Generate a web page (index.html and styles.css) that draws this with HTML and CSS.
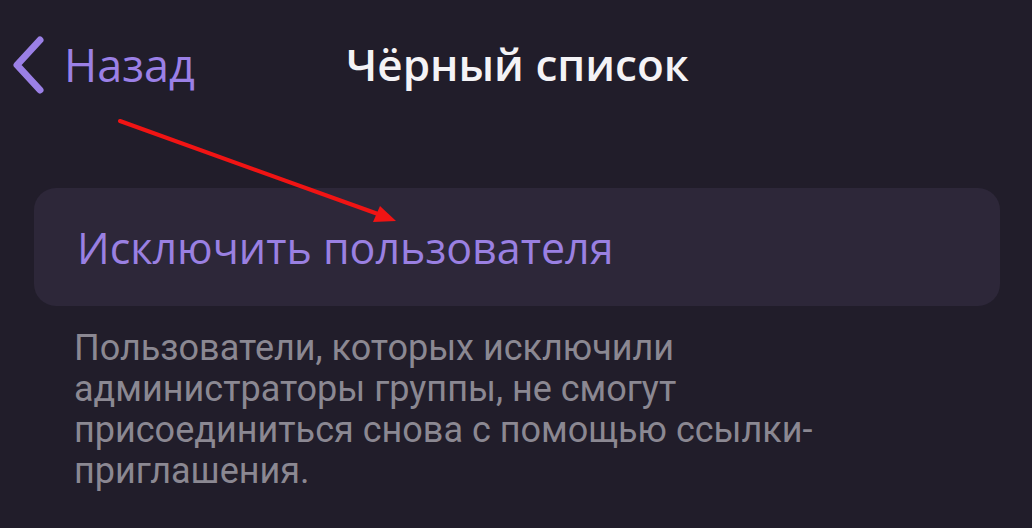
FILE: index.html
```html
<!DOCTYPE html>
<html lang="ru">
<head>
    <meta charset="UTF-8">
    <meta name="viewport" content="width=device-width, initial-scale=1.0">
    <title>Чёрный список</title>
    <link rel="stylesheet" href="styles.css">
</head>
<body>
    <header class="navbar">
        <a class="back" href="#">
            <svg class="back-icon" width="36" height="60" viewBox="0 0 36 60">
                <path d="M30 5 L7 30 L30 55" fill="none" stroke="currentColor" stroke-width="7" stroke-linecap="round" stroke-linejoin="round"/>
            </svg>
            <span>Назад</span>
        </a>
        <h1 class="title">Чёрный список</h1>
    </header>

    <main class="content">
        <div class="card">
            <a class="card-action" href="#">Исключить пользователя</a>
        </div>
        <p class="hint">Пользователи, которых исключили администраторы группы, не смогут присоединиться снова с помощью ссылки-приглашения.</p>
    </main>

    <!-- стрелка-пометка поверх скриншота -->
    <svg class="marker" width="1032" height="528" viewBox="0 0 1032 528">
        <line x1="120" y1="121" x2="378" y2="214" stroke="#f01414" stroke-width="4" stroke-linecap="round"/>
        <polygon points="396,221 373,222 380,206" fill="#f01414"/>
    </svg>
</body>
</html>
```

FILE: styles.css
```css
body {
    margin: 0;
    width: 1032px;
    height: 528px;
    overflow: hidden;
    background-color: #211d2a;
    font-family: Roboto, "Liberation Sans", sans-serif;
    position: relative;
}
.navbar {
    position: relative;
    height: 132px;
}
.back {
    display: flex;
    align-items: center;
    gap: 18px;
    padding: 34px 0 0 10px;
    color: #9b80e6;
    text-decoration: none;
    font-size: 45px;
    font-family: "Open Sans", Roboto, sans-serif;
}
.back-icon {
    flex-shrink: 0;
}
.title {
    position: absolute;
    top: 34px;
    left: 346px;
    margin: 0;
    color: #f4f3f6;
    font-size: 44px;
    font-weight: 600;
    font-family: "Open Sans", Roboto, sans-serif;
    letter-spacing: 0;
}
.content {
    padding: 56px 32px 0 34px;
}
.card {
    height: 118px;
    border-radius: 22px;
    background-color: #2d2739;
    display: flex;
    align-items: center;
    padding-left: 43px;
}
.card-action {
    color: #9a80e2;
    text-decoration: none;
    font-size: 43px;
    font-family: "Open Sans", Roboto, sans-serif;
}
.hint {
    margin: 22px 0 0 40px;
    width: 750px;
    color: #8b8892;
    font-size: 36px;
    line-height: 41px;
}
.marker {
    position: absolute;
    top: 0;
    left: 0;
    pointer-events: none;
}
```
